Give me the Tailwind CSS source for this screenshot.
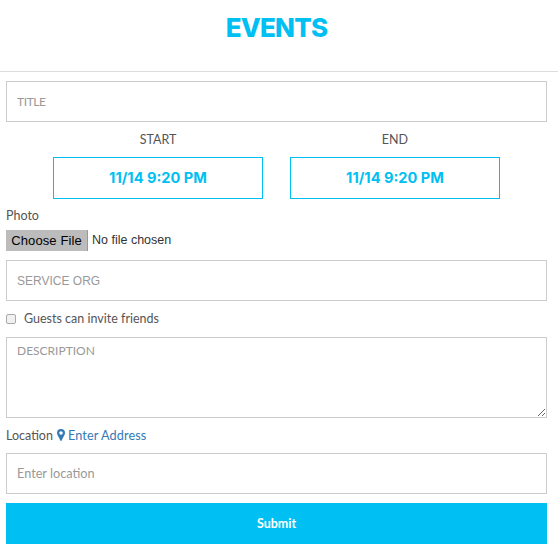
<!DOCTYPE html>
<html>
<head>
<meta charset="utf-8">
<script src="https://cdn.jsdelivr.net/npm/@tailwindcss/browser@4"></script>
</head>
<body class="bg-white font-['Lato','Liberation_Sans',sans-serif] text-[13px] text-[#555]">
<header class="h-[72px] border-b border-[#ddd] flex justify-center pt-[12px] pr-[5px]">
  <h1 class="text-[26px] leading-[32px] font-extrabold tracking-[-0.8px] font-['Inter',sans-serif] text-[#00c0f3]">EVENTS</h1>
</header>
<form class="px-[6px] pt-[9px] w-[547px] box-content">
  <input class="block w-[541px] h-[41px] border border-[#ccc] px-[10px] text-[12px] tracking-[-0.4px] placeholder:text-[#999] outline-none" placeholder="TITLE">
  <div class="flex justify-center gap-[27px] w-[541px] mt-[10px]">
    <div class="w-[210px] flex flex-col items-center">
      <span class="h-[16px] leading-[16px] text-[12.5px] text-[#555]">START</span>
      <button type="button" class="mt-[9px] w-[210px] h-[42px] pt-[2px] border border-[#00c0f3] text-[#00c0f3] text-[14.6px] font-bold font-['Inter',sans-serif]">11/14 9:20 PM</button>
    </div>
    <div class="w-[210px] flex flex-col items-center">
      <span class="h-[16px] leading-[16px] text-[12.5px] text-[#555]">END</span>
      <button type="button" class="mt-[9px] w-[210px] h-[42px] pt-[2px] border border-[#00c0f3] text-[#00c0f3] text-[14.6px] font-bold font-['Inter',sans-serif]">11/14 9:20 PM</button>
    </div>
  </div>
  <div class="mt-[9px] h-[16px] leading-[16px] text-[12.5px] text-[#555]">Photo</div>
  <div class="mt-[6px] flex items-center h-[21px] font-['Liberation_Sans',sans-serif] text-[13px] text-[#333]">
    <span class="w-[82px] h-[21px] bg-[#bcbcbc] border-r border-[#999] text-black flex items-center justify-center tracking-[0.1px]">Choose File</span>
    <span class="ml-[4px] text-[12.5px]">No file chosen</span>
  </div>
  <input class="block mt-[9px] w-[541px] h-[41px] border border-[#ccc] px-[10px] text-[12px] font-['Liberation_Sans',sans-serif] placeholder:text-[#999] outline-none" placeholder="SERVICE ORG">
  <label class="mt-[10px] h-[16px] flex items-center text-[12.5px] text-[#555]">
    <input type="checkbox" class="w-[10px] h-[10px] appearance-none rounded-[2px] border border-[#aaa] bg-[#f1f1f1]">
    <span class="ml-[8px]">Guests can invite friends</span>
  </label>
  <textarea class="block mt-[10px] w-[541px] h-[81px] border border-[#ccc] px-[10px] py-[4px] text-[12px] placeholder:text-[#999] outline-none" placeholder="DESCRIPTION"></textarea>
  <div class="mt-[10px] h-[16px] flex items-center text-[12.5px] text-[#555]">
    <span>Location</span>
    <svg class="ml-[4px] w-[8px] h-[12px] -translate-y-[1px]" viewBox="0 0 8 12"><path fill-rule="evenodd" fill="#337ab7" d="M4 0a4 4 0 0 1 4 4c0 1.100-.4 1.700-.8 2.500L4.600 11.400a.7.700 0 0 1-1.200 0L.8 6.500C.4 5.700 0 5.100 0 4a4 4 0 0 1 4-4Zm0 2.200a1.800 1.800 0 1 0 0 3.600 1.800 1.800 0 0 0 0-3.600Z"/></svg>
    <a class="ml-[3px] text-[#337ab7] text-[12.700px] tracking-[0.1px]">Enter Address</a>
  </div>
  <input class="block mt-[9px] w-[541px] h-[41px] border border-[#ccc] px-[10px] pb-[2px] text-[12.7px] placeholder:text-[#999] outline-none" placeholder="Enter location">
  <button type="button" class="block mt-[9px] w-[541px] h-[41px] pt-[1px] bg-[#00c0f3] text-white text-[12.5px] font-bold">Submit</button>
</form>
</body>
</html>
